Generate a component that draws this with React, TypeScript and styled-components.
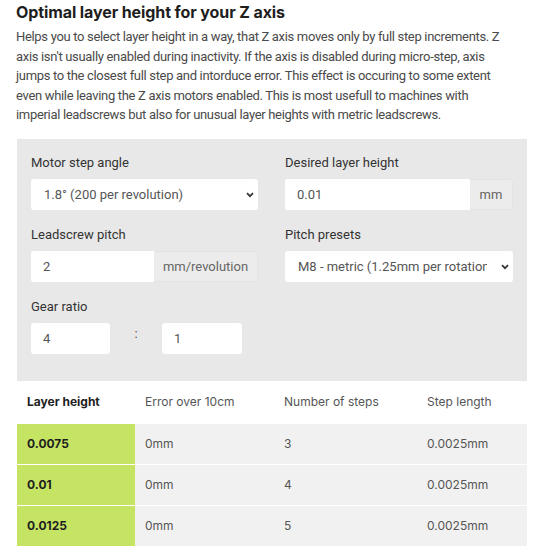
import React from 'react';
import styled, { createGlobalStyle } from 'styled-components';

const GlobalStyle = createGlobalStyle`
  body {
    margin: 0;
    background: #fff;
    font-family: Roboto, "Liberation Sans", sans-serif;
    color: #444;
  }
`;

const Page = styled.div`
  width: 540px;
  padding: 2px 13px 0 16px;
  box-sizing: border-box;
`;

const Title = styled.h2`
  margin: 0;
  font-family: Inter, "Liberation Sans", sans-serif;
  font-size: 16px;
  font-weight: 700;
  color: #1e1e1e;
  line-height: 20px;
  letter-spacing: -0.1px;
`;

const Intro = styled.p`
  margin: 5px 0 14px;
  font-size: 13px;
  letter-spacing: -0.32px;
  line-height: 19.5px;
  color: #4a4a4a;
  white-space: nowrap;
`;

const Panel = styled.div`
  margin-left: 1px;
  background: #e8e8e8;
  padding: 15px 14px 11px;
  display: grid;
  grid-template-columns: 227px 228px;
  column-gap: 27px;
`;

const Field = styled.div`
  margin-bottom: 16px;
`;

const Label = styled.div`
  font-size: 13px;
  line-height: 17px;
  color: #333;
  margin-bottom: 8px;
`;

const Control = styled.div`
  display: flex;
  height: 31px;
  background: #fff;
  border-radius: 3px;
  overflow: hidden;
  position: relative;
`;

const Input = styled.input`
  flex: 1;
  min-width: 0;
  border: none;
  outline: none;
  padding: 0 12px;
  font-family: Roboto, "Liberation Sans", sans-serif;
  font-size: 13px;
  color: #555;
  background: #fff;
`;

const Addon = styled.div<{ $w: number }>`
  width: ${(p) => p.$w}px;
  flex: none;
  background: #ececec;
  border: 1px solid #e3e3e3;
  border-left: none;
  box-sizing: border-box;
  display: flex;
  align-items: center;
  justify-content: center;
  font-size: 13px;
  color: #666;
`;

const Select = styled.select`
  appearance: none;
  width: 100%;
  border: none;
  outline: none;
  padding: 0 26px 0 13px;
  font-family: Roboto, "Liberation Sans", sans-serif;
  font-size: 13px;
  color: #555;
  background: #fff;
`;

const Chevron = styled.svg`
  position: absolute;
  right: 4px;
  top: 13px;
  pointer-events: none;
`;

const GearRow = styled.div`
  display: grid;
  grid-template-columns: 79px 52px 80px;
  align-items: center;
`;

const Colon = styled.span`
  text-align: center;
  font-size: 13px;
  color: #555;
  margin-top: -9px;
`;

const Table = styled.table`
  margin-left: 1px;
  width: 510px;
  border-collapse: collapse;
  font-family: Inter, "Liberation Sans", sans-serif;
  font-size: 12px;
  color: #444;
  table-layout: fixed;
`;

const Th = styled.th<{ $bold?: boolean }>`
  text-align: left;
  height: 42px;
  padding: 0 10px;
  font-weight: ${(p) => (p.$bold ? 700 : 400)};
  color: ${(p) => (p.$bold ? '#1e1e1e' : '#555')};
`;

const Td = styled.td<{ $hl?: boolean }>`
  height: 40px;
  padding: 0 10px;
  border-top: 1px solid #fff;
  background: ${(p) => (p.$hl ? '#c6e464' : '#f1f1f1')};
  font-weight: ${(p) => (p.$hl ? 700 : 400)};
  color: ${(p) => (p.$hl ? '#1e1e1e' : '#555')};
`;

const ChevronIcon = () => (
  <Chevron width="8" height="6" viewBox="0 0 8 6">
    <path d="M1 1.2l3 3 3-3" fill="none" stroke="#333" strokeWidth="1.7" />
  </Chevron>
);

const rows = [
  ['0.0075', '0mm', '3', '0.0025mm'],
  ['0.01', '0mm', '4', '0.0025mm'],
  ['0.0125', '0mm', '5', '0.0025mm'],
];

export default function App() {
  return (
    <Page>
      <GlobalStyle />
      <Title>Optimal layer height for your Z axis</Title>
      <Intro>
        Helps you to select layer height in a way, that Z axis moves only by full step increments. Z
        <br />
        axis isn't usually enabled during inactivity. If the axis is disabled during micro-step, axis
        <br />
        jumps to the closest full step and intorduce error. This effect is occuring to some extent
        <br />
        even while leaving the Z axis motors enabled. This is most usefull to machines with
        <br />
        imperial leadscrews but also for unusual layer heights with metric leadscrews.
      </Intro>
      <Panel>
        <Field>
          <Label>Motor step angle</Label>
          <Control>
            <Select defaultValue="1.8">
              <option value="1.8">1.8° (200 per revolution)</option>
              <option value="0.9">0.9° (400 per revolution)</option>
            </Select>
            <ChevronIcon />
          </Control>
        </Field>
        <Field>
          <Label>Desired layer height</Label>
          <Control>
            <Input defaultValue="0.01" />
            <Addon $w={43}>mm</Addon>
          </Control>
        </Field>
        <Field>
          <Label>Leadscrew pitch</Label>
          <Control>
            <Input defaultValue="2" />
            <Addon $w={104}>mm/revolution</Addon>
          </Control>
        </Field>
        <Field>
          <Label>Pitch presets</Label>
          <Control>
            <Select defaultValue="m8">
              <option value="m8">M8 - metric (1.25mm per rotation)</option>
              <option value="tr8">TR8x8 (8mm per rotation)</option>
            </Select>
            <ChevronIcon />
          </Control>
        </Field>
        <Field>
          <Label>Gear ratio</Label>
          <GearRow>
            <Control>
              <Input defaultValue="4" />
            </Control>
            <Colon>:</Colon>
            <Control>
              <Input defaultValue="1" />
            </Control>
          </GearRow>
        </Field>
      </Panel>
      <Table>
        <colgroup>
          <col style={{ width: 118 }} />
          <col style={{ width: 139 }} />
          <col style={{ width: 143 }} />
          <col style={{ width: 110 }} />
        </colgroup>
        <thead>
          <tr>
            <Th $bold>Layer height</Th>
            <Th>Error over 10cm</Th>
            <Th>Number of steps</Th>
            <Th>Step length</Th>
          </tr>
        </thead>
        <tbody>
          {rows.map((r) => (
            <tr key={r[0]}>
              <Td $hl>{r[0]}</Td>
              <Td>{r[1]}</Td>
              <Td>{r[2]}</Td>
              <Td>{r[3]}</Td>
            </tr>
          ))}
        </tbody>
      </Table>
    </Page>
  );
}
